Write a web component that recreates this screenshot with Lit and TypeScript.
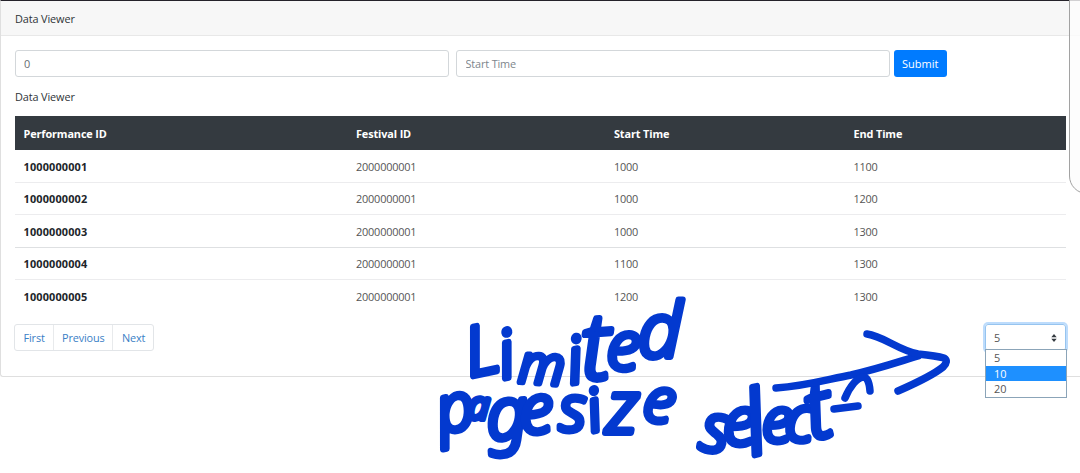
import { LitElement, html, svg, css } from "lit";
import { customElement, state } from "lit/decorators.js";
import { classMap } from "lit/directives/class-map.js";

type Glyph = [char: string, x: number, y: number, size: number, turn: number];

const rows = [
  ["1000000001", "2000000001", "1000", "1100"],
  ["1000000002", "2000000001", "1000", "1200"],
  ["1000000003", "2000000001", "1000", "1300"],
  ["1000000004", "2000000001", "1100", "1300"],
  ["1000000005", "2000000001", "1200", "1300"],
];

const notes: Glyph[][] = [
  [["L", 470, 377, 68, -12], ["i", 503, 379, 66, -12], ["m", 518, 382, 53, 4], ["i", 571, 384, 64, -10], ["t", 583, 380, 92, -4], ["e", 606, 369, 68, 2], ["d", 638, 357, 76, 0]],
  [["p", 441, 434, 66, -12], ["a", 467, 418, 38, 4], ["g", 488, 440, 72, -4], ["e", 521, 434, 68, -4], [" ", 549, 434, 20, 0], ["s", 559, 431, 64, 0], ["i", 592, 432, 58, -14], ["z", 606, 433, 74, 0], ["e", 641, 419, 62, 10]],
  [["s", 698, 449, 68, 10], ["e", 723, 445, 68, 0], ["l", 752, 456, 88, -14], ["e", 762, 442, 62, 0], ["c", 784, 440, 64, 4], ["t", 812, 440, 80, -14]],
];

@customElement("ink-notes")
export class InkNotes extends LitElement {
  static styles = css`
    :host { position: absolute; inset: 0; pointer-events: none; }
    .canvas { display: block; width: 1080px; height: 473px; }
    .word { font-family: "Noto Sans", "Open Sans", sans-serif; font-style: italic; font-weight: 300; fill: #0339cf; stroke: #0339cf; stroke-width: 6; stroke-linejoin: round; white-space: pre; }
    .stroke { fill: none; stroke: #0339cf; stroke-width: 7.5; stroke-linecap: round; stroke-linejoin: round; }
  `;
  render() {
    return html`<svg class="canvas" viewBox="0 0 1080 473">
      ${notes.map((word) => svg`<text class="word">${word.map(([c, x, y, size, turn]) =>
        svg`<tspan x=${x} y=${y} font-size=${size} rotate=${turn}>${c}</tspan>`)}</text>`)}
      <path class="stroke" d="M776 388 C807 386 829 379 851 375 C878 369 898 362 918 356"/>
      <path class="stroke" d="M867 334 C883 336 898 350 918 354 Q937 356 944 358 Q949 361 943 367 C932 376 914 384 898 391"/>
      <path class="stroke" d="M834 409 L858 406 M845 398 C850 386 857 378 863 377 Q869 377 870 391"/>
    </svg>`;
  }
}

@customElement("app-root")
export class AppRoot extends LitElement {
  static styles = css`
    :host { display: block; position: relative; width: 1080px; height: 473px; overflow: hidden; background: #fff; color: #2f3438; font: 10.9px/16px "Open Sans", "Noto Sans", sans-serif; }
    * { box-sizing: border-box; }
    .card { height: 377px; border-top: 1px solid #25222a; border-left: 1px solid #dfdfdf; border-bottom: 1px solid #dfdfdf; border-bottom-left-radius: 3px; }
    .head { height: 35px; padding: 10px 14px; background: #f7f7f7; border-bottom: 1px solid #e8e8e8; }
    .title { letter-spacing: -0.12px; }
    .body { padding: 14px 13.5px 0; }
    .form { display: grid; column-gap: 7px; grid-template-columns: 434.5px 434px 53.5px; height: 27px; }
    .field { border: 1px solid #d3d7da; border-radius: 3px; padding: 5px 8.5px; font: inherit; color: #666c71; background: #fff; width: 100%; height: 27px; outline: 0; }
    .field::placeholder { color: #7d858c; opacity: 1; letter-spacing: -0.15px; }
    .submit { margin-left: -3.5px; width: 53.5px; height: 27px; border: 0; border-radius: 3px; background: #007bff; color: #fff; font: inherit; font-size: 11px; padding: 0; }
    .caption { padding: 12px 0.5px 11px; height: 39px; }
    .table { width: 1051.5px; }
    .row { display: grid; grid-template-columns: 332.5px 258px 239.5px 1fr; height: 32.5px; padding: 2px 0 0 9px; align-items: center; border-bottom: 1px solid #ececee; color: #555; letter-spacing: -0.19px; }
    .row:nth-child(4) { border-bottom-color: #dee0e2; }
    .row:last-child { border-bottom: 0; padding-top: 1px; }
    .columns { height: 34px; background: #343a40; color: #fff; font-weight: 700; border-bottom: 0; letter-spacing: -0.13px; }
    .key { color: #212529; font-weight: 700; letter-spacing: 0.16px; }
    .foot { display: flex; justify-content: space-between; width: 1051px; padding-top: 11px; }
    .pager { display: flex; height: 27px; margin-left: -0.5px; border: 1px solid #e2e5e8; border-radius: 3px; }
    .page { padding: 5px 7.8px 5px 8.5px; color: #3a80c6; border-left: 1px solid #e8eaec; letter-spacing: -0.14px; }
    .page:first-child { border-left: 0; }
    .picker { position: relative; width: 81px; height: 27px; border: 1px solid #96c4ef; border-radius: 3px; box-shadow: 0 0 0 2px #bddcfc; display: flex; justify-content: space-between; align-items: center; padding: 1px 8px 0 8.5px; color: #555; }
    .arrows { width: 6px; height: 8px; }
    .menu { position: absolute; top: 24.5px; left: -1px; width: 82px; height: 49px; border: 1px solid #8ba4b8; background: #fff; }
    .option { height: 15.7px; line-height: 16px; padding-left: 8.5px; }
    .active { background: #1e90ff; color: #fff; }
    .panel { position: absolute; left: 1069px; top: -20px; width: 60px; height: 214px; border: 1px solid #a2a2a2; border-radius: 18px; background: rgba(252, 252, 252, 0.8); }
  `;

  @state() private hovered = 10;

  render() {
    return html`
      <section class="card">
        <header class="head title">Data Viewer</header>
        <div class="body">
          <div class="form">
            <input class="field" .value=${"0"} />
            <input class="field" placeholder="Start Time" />
            <button class="submit">Submit</button>
          </div>
          <div class="caption title">Data Viewer</div>
          <div class="table">
            <div class="row columns">
              <span>Performance ID</span><span>Festival ID</span><span>Start Time</span><span>End Time</span>
            </div>
            ${rows.map((r) => html`<div class="row">${r.map((v, i) => html`<span class=${classMap({ key: i === 0 })}>${v}</span>`)}</div>`)}
          </div>
          <div class="foot">
            <nav class="pager"><a class="page">First</a><a class="page">Previous</a><a class="page">Next</a></nav>
            <div class="picker">
              <span>5</span>
              <svg class="arrows" viewBox="0 0 6 8"><path fill="#343a40" d="M3 0L5.7 3.2H.3zM3 8L.3 4.8H5.7z"/></svg>
              <div class="menu">
                ${[5, 10, 20].map((n) => html`<div class=${classMap({ option: true, active: n === this.hovered })} @mouseenter=${() => (this.hovered = n)}>${n}</div>`)}
              </div>
            </div>
          </div>
        </div>
      </section>
      <div class="panel"></div>
      <ink-notes></ink-notes>
    `;
  }
}
